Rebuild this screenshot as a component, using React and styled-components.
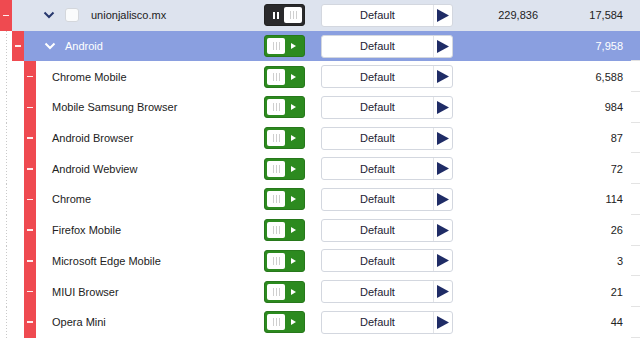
import React from "react";
import styled, { createGlobalStyle } from "styled-components";

const Global = createGlobalStyle`
  html, body { margin: 0; padding: 0; background: #ffffff; }
  body { font-family: "Liberation Sans", Arial, Helvetica, sans-serif; }
  * { box-sizing: border-box; }
`;

const Table = styled.div`
  width: 640px;
  height: 341px;
  overflow: hidden;
  display: flex;
  flex-direction: column;
`;

const Row = styled.div`
  display: flex;
  height: 30.7px;
  flex: none;
`;

const Gutter = styled.div`
  width: 12px;
  flex: none;
  background-image: ${(p) =>
    p.$line ? "linear-gradient(#c9c9c9 50%, transparent 50%)" : "none"};
  background-size: 1px 3px;
  background-repeat: repeat-y;
  background-position: 6px 0;
`;

const Collapse = styled.div`
  width: 12px;
  flex: none;
  background: #ef4a50;
  display: flex;
  align-items: center;
  justify-content: center;
  &::after {
    content: "";
    width: 6px;
    height: 1.5px;
    background: #ffffff;
    opacity: 0.9;
  }
`;

const Main = styled.div`
  flex: 1;
  display: flex;
  align-items: center;
  background: ${(p) => p.$bg || "#ffffff"};
  color: ${(p) => (p.$light ? "#ffffff" : "#222222")};
  font-size: 11px;
`;

const NameCell = styled.div`
  flex: 1;
  display: flex;
  align-items: center;
  padding-left: ${(p) => p.$pad}px;
  gap: ${(p) => p.$gap || 0}px;
  white-space: nowrap;
  overflow: hidden;
`;

const DomainName = styled.span`
  margin-left: 2px;
`;

const Chevron = styled.svg`
  width: 12px;
  height: 8px;
  flex: none;
`;

const Checkbox = styled.span`
  width: 14px;
  height: 14px;
  border: 1px solid #d4d7dc;
  border-radius: 3px;
  background: #fafbfc;
  flex: none;
`;

const ToggleCell = styled.div`
  width: 57px;
  flex: none;
  display: flex;
  align-items: center;
`;

const Toggle = styled.div`
  width: 41px;
  height: 22px;
  border-radius: 3px;
  padding: 2px;
  display: flex;
  align-items: stretch;
  justify-content: space-between;
  background: ${(p) => (p.$on ? "#2c8a1f" : "#2a2a2c")};
  border: 1px solid ${(p) => (p.$on ? "#27781b" : "#222222")};
`;

const Knob = styled.span`
  width: 18px;
  border-radius: 2px;
  background: #ffffff;
  display: flex;
  align-items: center;
  justify-content: center;
  gap: 2px;
`;

const Grip = styled.span`
  width: 1px;
  height: 8px;
  background: #cfcfcf;
`;

const IconSlot = styled.span`
  flex: 1;
  display: flex;
  align-items: center;
  justify-content: center;
  gap: 2px;
`;

const PauseBar = styled.span`
  width: 2px;
  height: 7px;
  background: #ffffff;
`;

const SelectCell = styled.div`
  width: 132px;
  flex: none;
  display: flex;
  align-items: center;
`;

const Select = styled.div`
  width: 132px;
  height: 23px;
  border: 1px solid #d3d7df;
  border-radius: 3px;
  background: #ffffff;
  display: flex;
  align-items: stretch;
`;

const SelectLabel = styled.span`
  flex: 1;
  display: flex;
  align-items: center;
  justify-content: center;
  color: #1d2233;
  font-size: 11px;
`;

const SelectArrow = styled.span`
  width: 19px;
  border-left: 1px solid #e2e4e8;
  display: flex;
  align-items: center;
  justify-content: center;
`;

const NumCell = styled.div`
  width: 85px;
  flex: none;
  text-align: right;
  color: ${(p) => (p.$light ? "#ffffff" : "#222222")};
`;

const Spacer = styled.div`
  width: 8px;
  flex: none;
`;

const EndCell = styled.div`
  width: 9px;
  flex: none;
  align-self: stretch;
  border-bottom: 1px solid ${(p) => (p.$hide ? "transparent" : "#e3e3e3")};
`;

const Play = () => (
  <svg width="12" height="13" viewBox="0 0 12 13">
    <polygon points="0,0 12,6.5 0,13" fill="#1f2c66" />
  </svg>
);

const SmallPlay = () => (
  <svg width="5" height="6" viewBox="0 0 5 6">
    <polygon points="0,0 5,3 0,6" fill="#ffffff" />
  </svg>
);

const ChevronDown = ({ color }) => (
  <Chevron viewBox="0 0 12 8">
    <polyline points="1.5,1.5 6,6 10.5,1.5" fill="none" stroke={color} strokeWidth="2" />
  </Chevron>
);

const Grips = () => (
  <Knob>
    <Grip />
    <Grip />
    <Grip />
  </Knob>
);

const ToggleSwitch = ({ on }) => (
  <Toggle $on={on}>
    {on ? (
      <>
        <Grips />
        <IconSlot>
          <SmallPlay />
        </IconSlot>
      </>
    ) : (
      <>
        <IconSlot>
          <PauseBar />
          <PauseBar />
        </IconSlot>
        <Grips />
      </>
    )}
  </Toggle>
);

const DefaultSelect = () => (
  <Select>
    <SelectLabel>Default</SelectLabel>
    <SelectArrow>
      <Play />
    </SelectArrow>
  </Select>
);

const children = [
  ["Chrome Mobile", "6,588"],
  ["Mobile Samsung Browser", "984"],
  ["Android Browser", "87"],
  ["Android Webview", "72"],
  ["Chrome", "114"],
  ["Firefox Mobile", "26"],
  ["Microsoft Edge Mobile", "3"],
  ["MIUI Browser", "21"],
  ["Opera Mini", "44"],
];

export default function App() {
  return (
    <>
      <Global />
      <Table>
        <Row>
          <Collapse />
          <Main $bg="#dde3ee">
            <NameCell $pad={31} $gap={10}>
              <ChevronDown color="#27386e" />
              <Checkbox />
              <DomainName>unionjalisco.mx</DomainName>
            </NameCell>
            <ToggleCell>
              <ToggleSwitch on={false} />
            </ToggleCell>
            <SelectCell>
              <DefaultSelect />
            </SelectCell>
            <NumCell>229,836</NumCell>
            <NumCell>17,584</NumCell>
            <Spacer />
            <EndCell $hide />
          </Main>
        </Row>
        <Row>
          <Gutter $line />
          <Collapse />
          <Main $bg="#8a9fe0" $light>
            <NameCell $pad={20} $gap={9}>
              <ChevronDown color="#ffffff" />
              <span>Android</span>
            </NameCell>
            <ToggleCell>
              <ToggleSwitch on />
            </ToggleCell>
            <SelectCell>
              <DefaultSelect />
            </SelectCell>
            <NumCell $light />
            <NumCell $light>7,958</NumCell>
            <Spacer />
            <EndCell />
          </Main>
        </Row>
        {children.map(([name, count]) => (
          <Row key={name}>
            <Gutter $line />
            <Gutter />
            <Collapse />
            <Main>
              <NameCell $pad={16}>{name}</NameCell>
              <ToggleCell>
                <ToggleSwitch on />
              </ToggleCell>
              <SelectCell>
                <DefaultSelect />
              </SelectCell>
              <NumCell />
              <NumCell>{count}</NumCell>
              <Spacer />
              <EndCell />
            </Main>
          </Row>
        ))}
      </Table>
    </>
  );
}
